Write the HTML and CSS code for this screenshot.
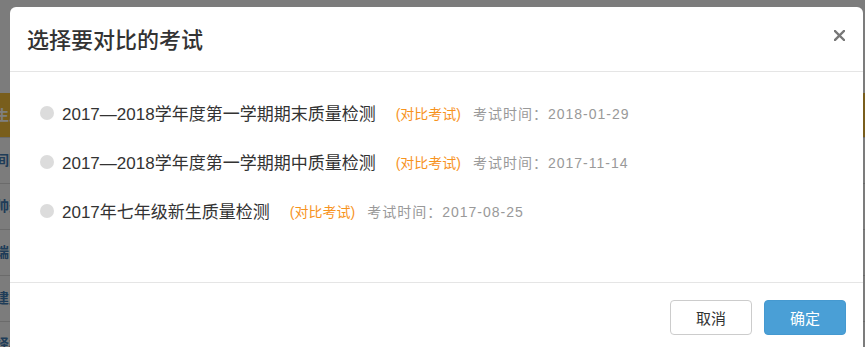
FILE: index.html
```html
<!DOCTYPE html>
<html lang="zh-CN">
<head>
    <meta charset="UTF-8">
    <title>选择要对比的考试</title>
    <link rel="stylesheet" href="styles.css">
</head>
<body>
    <div class="page">
        <div class="page-top"></div>
        <div class="side-row active"><span>生成报告</span></div>
        <div class="side-row"><span>间隔统计</span></div>
        <div class="side-row"><span>帅选条件</span></div>
        <div class="side-row"><span>端口设置</span></div>
        <div class="side-row"><span>建立档案</span></div>
        <div class="side-row"><span>择校分析</span></div>
    </div>

    <div class="mask"></div>

    <div class="modal">
        <div class="modal-header">
            <h4 class="modal-title">选择要对比的考试</h4>
            <button class="close" type="button">
                <svg width="11" height="11" viewBox="0 0 11 11">
                    <path d="M1 1 L10 10 M10 1 L1 10" stroke="#777" stroke-width="2.4" stroke-linecap="square"/>
                </svg>
            </button>
        </div>

        <div class="modal-body">
            <label class="exam-item">
                <span class="radio"></span>
                <span class="exam-name">2017—2018学年度第一学期期末质量检测</span>
                <span class="exam-tag">(对比考试)</span>
                <span class="exam-time">考试时间：2018-01-29</span>
            </label>
            <label class="exam-item">
                <span class="radio"></span>
                <span class="exam-name">2017—2018学年度第一学期期中质量检测</span>
                <span class="exam-tag">(对比考试)</span>
                <span class="exam-time">考试时间：2017-11-14</span>
            </label>
            <label class="exam-item">
                <span class="radio"></span>
                <span class="exam-name">2017年七年级新生质量检测</span>
                <span class="exam-tag">(对比考试)</span>
                <span class="exam-time">考试时间：2017-08-25</span>
            </label>
        </div>

        <div class="modal-footer">
            <button class="btn btn-default" type="button">取消</button>
            <button class="btn btn-primary" type="button">确定</button>
        </div>
    </div>
</body>
</html>
```

FILE: styles.css
```css
body {
    margin: 0;
    font-family: "Liberation Sans", "Noto Sans CJK SC", sans-serif;
    background-color: #f8f8f8;
    overflow: hidden;
}
.page {
    width: 100%;
}
.page-top {
    height: 93px;
}
.side-row {
    height: 45px;
    line-height: 45px;
    border-bottom: 1px solid #d6d6d6;
    font-size: 14px;
    font-weight: bold;
    color: #3f79b0;
    white-space: nowrap;
    overflow: hidden;
}
.side-row span {
    margin-left: -5px;
}
.side-row.active {
    background-color: #f2bc38;
    color: #fff;
    height: 44px;
    line-height: 44px;
}
.mask {
    position: fixed;
    top: 0;
    left: 0;
    right: 0;
    bottom: 0;
    background-color: rgba(0, 0, 0, 0.5);
}
.modal {
    position: fixed;
    top: 7px;
    left: 10px;
    width: 853px;
    background: #fff;
    border-radius: 6px;
    color: #333;
}
.modal-header {
    display: flex;
    justify-content: space-between;
    align-items: flex-start;
    height: 64px;
    padding: 0 18px 0 17px;
    border-bottom: 1px solid #e5e5e5;
}
.modal-title {
    margin: 0;
    padding-top: 20px;
    font-size: 22px;
    line-height: 28px;
    font-weight: 500;
    color: #333;
}
.close {
    margin-top: 22px;
    padding: 0;
    border: none;
    background: none;
    cursor: pointer;
}
.modal-body {
    padding: 16px 20px 47px 30px;
}
.exam-item {
    display: flex;
    align-items: center;
    height: 49px;
    cursor: pointer;
    white-space: nowrap;
}
.radio {
    width: 14px;
    height: 14px;
    border-radius: 50%;
    background-color: #dcdcdc;
    margin-right: 8px;
}
.exam-name {
    font-size: 17px;
    color: #333;
    margin-right: 20px;
}
.exam-tag {
    font-size: 14px;
    color: #f7931e;
    margin-right: 12px;
}
.exam-time {
    font-size: 14px;
    letter-spacing: 1px;
    color: #999;
}
.modal-footer {
    display: flex;
    justify-content: flex-end;
    gap: 12px;
    padding: 17px 17px 20px;
    border-top: 1px solid #e5e5e5;
}
.btn {
    width: 82px;
    height: 35px;
    font-family: inherit;
    font-size: 15px;
    border-radius: 4px;
    cursor: pointer;
}
.btn-default {
    background: #fff;
    border: 1px solid #ccc;
    color: #333;
}
.btn-primary {
    background: #4a9fd6;
    border: 1px solid #4599d0;
    color: #fff;
}
```
